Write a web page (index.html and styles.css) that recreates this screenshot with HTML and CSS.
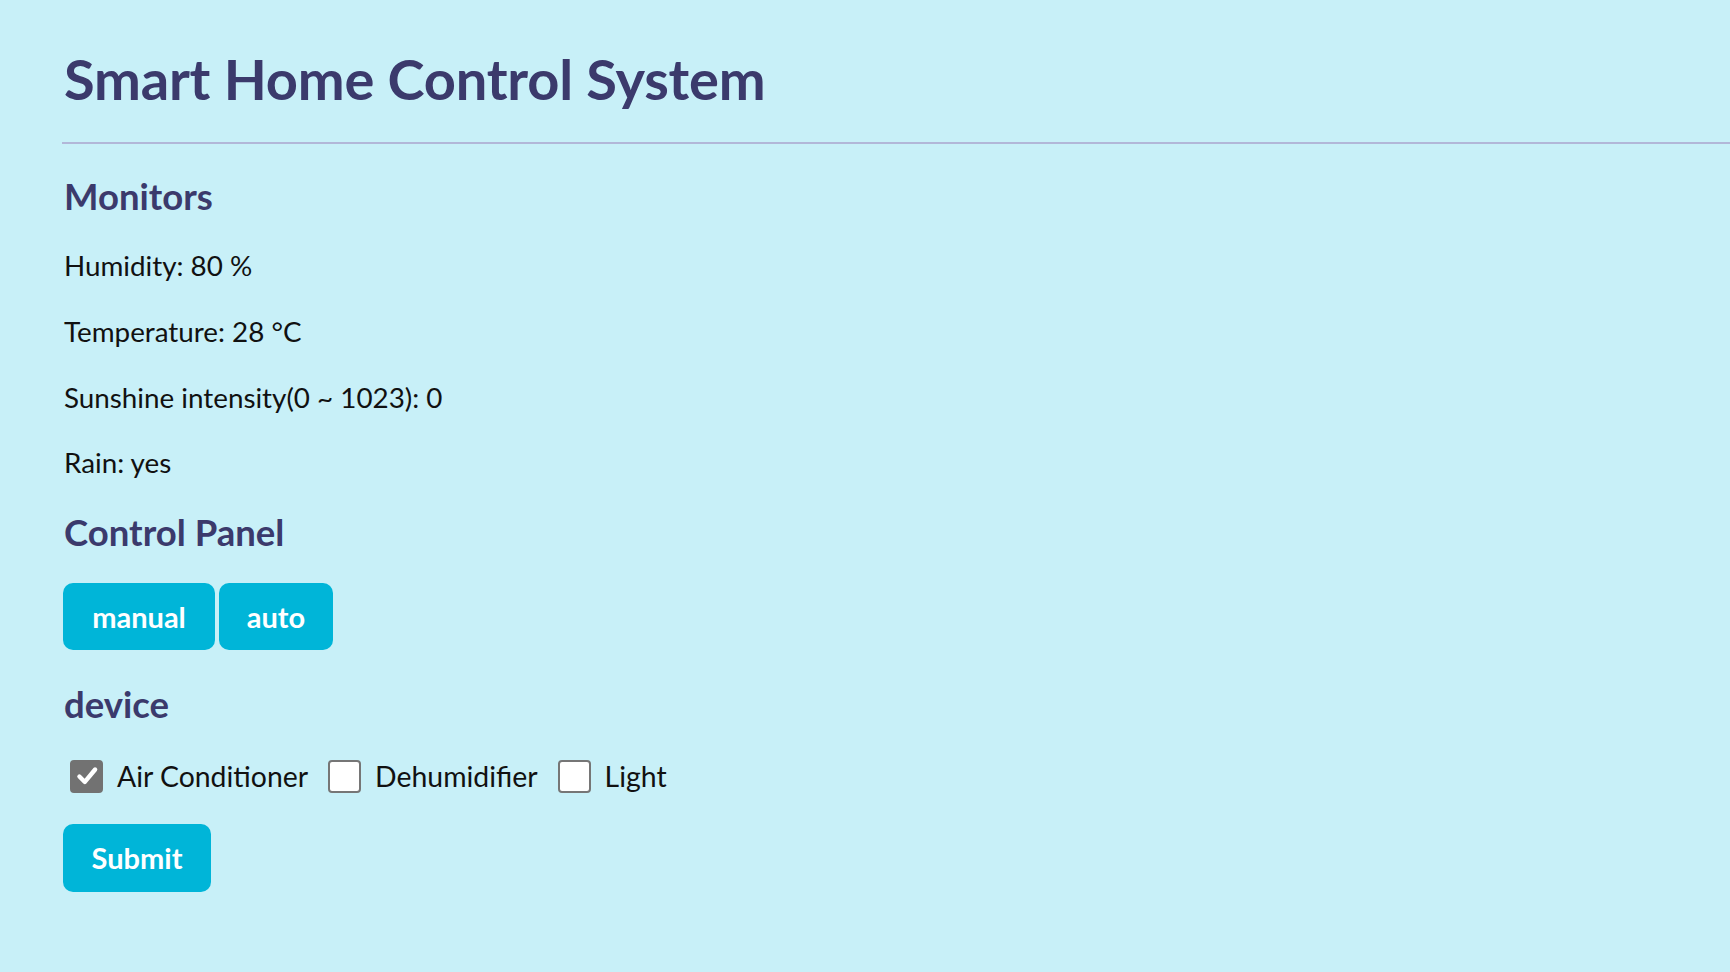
FILE: index.html
```html
<!DOCTYPE html>
<html lang="en">
<head>
<meta charset="utf-8">
<title>Smart Home Control System</title>
<link rel="stylesheet" href="styles.css">
</head>
<body>
<div class="page">
  <h1 class="title">Smart Home Control System</h1>
  <div class="divider"></div>
  <h2 class="section">Monitors</h2>
  <p class="reading">Humidity: 80 %</p>
  <p class="reading">Temperature: 28 °C</p>
  <p class="reading">Sunshine intensity(0 ~ 1023): 0</p>
  <p class="reading">Rain: yes</p>
  <h2 class="section section-control">Control Panel</h2>
  <div class="modes">
    <button class="btn btn-manual">manual</button>
    <button class="btn btn-auto">auto</button>
  </div>
  <h2 class="section section-device">device</h2>
  <div class="devices">
    <label class="device"><span class="box checked"><svg viewBox="0 0 24 24" width="26" height="26"><path d="M5 12.5 L10 17.5 L19.5 6" fill="none" stroke="#fff" stroke-width="4" stroke-linecap="round" stroke-linejoin="round"/></svg></span><span class="dlabel">Air Conditioner</span></label>
    <label class="device"><span class="box"></span><span class="dlabel">Dehumidifier</span></label>
    <label class="device"><span class="box"></span><span class="dlabel">Light</span></label>
  </div>
  <button class="btn btn-submit">Submit</button>
</div>
</body>
</html>
```
FILE: styles.css
```css
html, body {
  margin: 0;
  padding: 0;
  background: #c8f0f8;
}
body {
  font-family: Lato, "Liberation Sans", sans-serif;
  min-height: 972px;
}
.page {
  display: flex;
  flex-direction: column;
  align-items: flex-start;
  padding: 49px 0 0 64px;
}
.title {
  margin: 0;
  font-size: 56px;
  line-height: 60px;
  font-weight: 700;
  color: #3b3a6c;
  letter-spacing: -0.2px;
}
.divider {
  align-self: stretch;
  height: 2px;
  background: #b2b7d8;
  margin-top: 33px;
  margin-left: -2px;
}
.section {
  margin: 32px 0 0 0;
  font-size: 36.5px;
  line-height: 40px;
  font-weight: 700;
  color: #3b3a6c;
}
.reading {
  margin: 0;
  font-size: 27.8px;
  line-height: 32px;
  color: #111;
}
.section + .reading {
  margin-top: 34px;
}
.reading + .reading {
  margin-top: 33.8px;
}
.section-control {
  margin-top: 33px;
}
.modes {
  display: flex;
  gap: 4px;
  margin-top: 31px;
  margin-left: -1px;
}
.btn {
  border: none;
  background: #00b5d8;
  color: #fff;
  font-family: Lato, "Liberation Sans", sans-serif;
  font-size: 29px;
  font-weight: 700;
  height: 67px;
  border-radius: 10px;
  padding: 0;
  cursor: pointer;
}
.btn-manual { width: 152px; }
.btn-auto { width: 114px; }
.section-device {
  margin-top: 34px;
}
.devices {
  display: flex;
  align-items: center;
  gap: 20px;
  margin-top: 35.5px;
  margin-left: 6px;
}
.device {
  display: flex;
  align-items: center;
  gap: 14px;
}
.box {
  width: 33px;
  height: 33px;
  box-sizing: border-box;
  border: 2px solid #767676;
  border-radius: 4px;
  background: #fff;
  display: flex;
  align-items: center;
  justify-content: center;
}
.box.checked {
  background: #727272;
  border-color: #727272;
}
.dlabel {
  font-size: 28.4px;
  line-height: 33px;
  color: #111;
}
.btn-submit {
  width: 148px;
  height: 68px;
  margin-top: 31px;
  margin-left: -1px;
}
```
